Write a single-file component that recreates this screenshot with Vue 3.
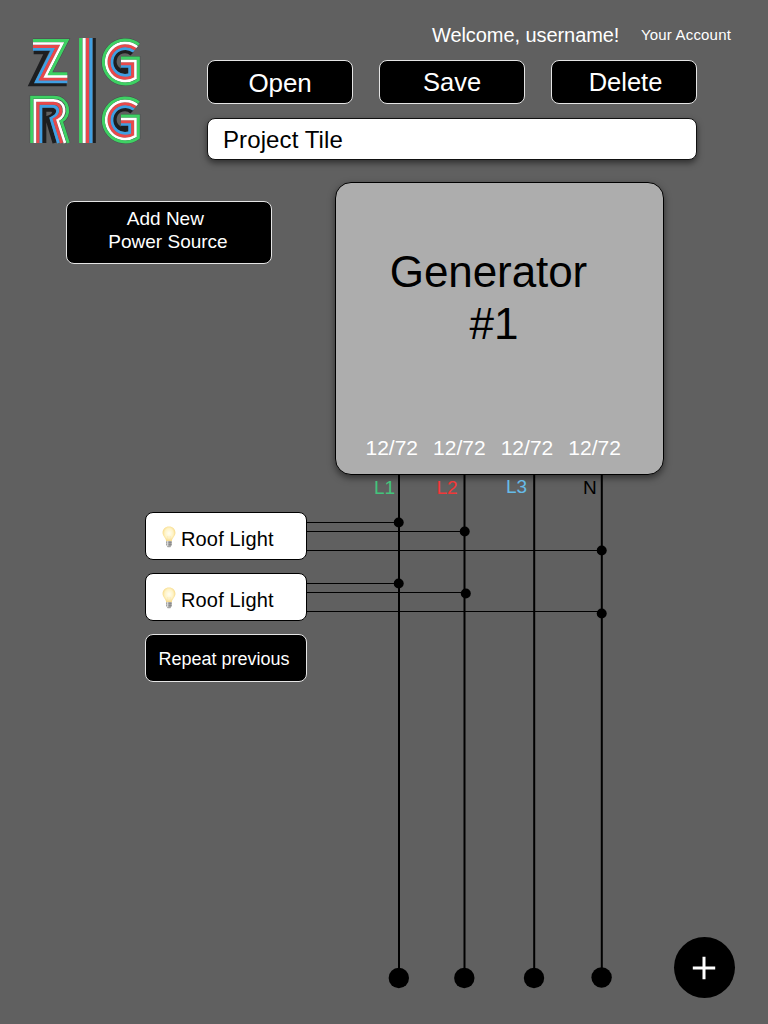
<script setup>
const actions = ['Open', 'Save', 'Delete']
const phases = [
  { name: 'L1', load: '12/72', x: 399, end: 978 },
  { name: 'L2', load: '12/72', x: 464.5, end: 978 },
  { name: 'L3', load: '12/72', x: 534.2, end: 978 },
  { name: 'N', load: '12/72', x: 601.8, end: 977.5 },
]
const taps = [
  { y: 522.5, x: 398.7, dotY: 522.5 },
  { y: 531.5, x: 464.7, dotY: 531.5 },
  { y: 550.5, x: 601.7, dotY: 550.5 },
  { y: 583.5, x: 398.7, dotY: 583.5 },
  { y: 592.5, x: 465.8, dotY: 593.5 },
  { y: 611.5, x: 601.7, dotY: 613.5 },
]
const lights = ['Roof Light', 'Roof Light']
const stripes = [
  { color: '#1d1e20', i: 4, width: 13 },
  { color: '#3f9fe3', i: 3, width: 9 },
  { color: '#e8484a', i: 2, width: 9 },
  { color: '#ffffff', i: 1, width: 8 },
  { color: '#3ed163', i: 0, width: 9 },
]
const zPaths = [
  'M39 31.500H141L90 131H142',
  'M39 40.500H126.800L76.600 139H142',
  'M39 49.500H112.600L62.900 147H142',
  'M39 58H98.700L49.200 155H142',
  'M41 66.500H80L33.500 162H140',
]
const gPaths = [
  'M357 44A66 66 0 1 0 355 149V84H303',
  'M351.600 50.900A57.500 57.500 0 1 0 346.500 144.700V92.500H303',
  'M346.400 57.500A49 49 0 1 0 338 139.800V101H303',
  'M341.100 64.200A40.500 40.500 0 1 0 329.500 134.200V109H303',
  'M335.800 71.900A31 31 0 1 0 319 125V116H303',
]
const rPaths = [
  'M35 339V202H101C150 202 154 260 124 274L145 339',
  'M44.500 339V211H100C138 211 143 257 113 271L135 339',
  'M53.500 339V220H99C127 220 132 255 103 268L125 339',
  'M62.500 339V229H98C117 229 121 253 93 265L115.500 339',
  'M72.500 339V239H93C108 239 107 257 82 264L104 339',
]
</script>

<template>
  <main class="page">
    <svg class="wires" viewBox="0 0 768 1024" width="768" height="1024">
      <g v-for="p in phases" :key="p.name">
        <path :d="`M${p.x} 470V${p.end}`" stroke="#000" stroke-width="2" />
        <circle :cx="p.x - 0.2" :cy="p.end" r="10.2" />
      </g>
      <g v-for="t in taps" :key="t.y">
        <path :d="`M306 ${t.y}H${t.x}`" stroke="#000" stroke-width="1" />
        <circle :cx="t.x" :cy="t.dotY" r="5" />
      </g>
    </svg>

    <header class="header">
      <svg class="logo" viewBox="0 0 390 360" width="130" height="120" fill="none">
        <g stroke="#444b4b" stroke-width="12">
          <path :d="zPaths[0]" /><path :d="rPaths[0]" /><path :d="gPaths[0]" />
          <path :d="gPaths[0]" transform="translate(0 174)" />
        </g>
        <g v-for="s in stripes" :key="s.color" :stroke="s.color" :stroke-width="s.width">
          <path :d="zPaths[s.i]" />
          <path :d="rPaths[s.i]" />
          <path :d="`M${182 + s.i * 10.2} 24V339`" stroke-width="9.5" />
          <path :d="gPaths[s.i]" />
          <path :d="gPaths[s.i]" transform="translate(0 174)" />
        </g>
      </svg>
      <div class="top">
        <div class="account">
          <span class="welcome">Welcome, username!</span>
          <a class="link">Your Account</a>
        </div>
        <nav class="actions">
          <button v-for="a in actions" :key="a" class="btn" :class="a.toLowerCase()">{{ a }}</button>
        </nav>
        <div class="title">Project Tile</div>
      </div>
    </header>

    <section class="source">
      <button class="btn add">Add New&nbsp;<br>Power Source</button>
      <article class="generator">
        <h1>Generator<br><span class="num">#1</span></h1>
        <div class="loads"><span v-for="p in phases" :key="p.name">{{ p.load }}</span></div>
      </article>
    </section>

    <span v-for="p in phases" :key="p.name" class="phase" :class="p.name.toLowerCase()">{{ p.name }}</span>

    <section class="devices">
      <div v-for="(l, i) in lights" :key="i" class="device">
        <svg class="bulb" viewBox="0 0 14 22" width="14" height="22">
          <defs>
            <radialGradient id="glow" cx=".5" cy=".45" r=".6">
              <stop offset="0" stop-color="#fffef4" />
              <stop offset=".55" stop-color="#fff3c4" />
              <stop offset="1" stop-color="#f3cd69" />
            </radialGradient>
          </defs>
          <path d="M7 .5C3.200.5.6 3.200.6 6.800C.6 10.400 3.800 11.500 4.300 15.500H9.700C10.200 11.500 13.400 10.400 13.400 6.800C13.400 3.200 10.800.5 7 .5Z" fill="url(#glow)" />
          <path d="M5.800 14.500V10M8.200 14.500V10" stroke="#f3dfae" stroke-width=".5" fill="none" />
          <path d="M4.300 15H9.700V19L8.400 21.200H5.600L4.300 19Z" fill="#a5a5a3" />
          <path d="M4.300 16.700H9.700M4.300 18.700H9.700" stroke="#77777a" stroke-width=".7" />
          <path d="M5.700 15V20" stroke="#dedede" stroke-width="1.200" />
        </svg>
        <span>{{ l }}</span>
      </div>
      <button class="btn repeat">Repeat previous</button>
    </section>

    <button class="fab" aria-label="Add">
      <svg width="24" height="24" viewBox="0 0 24 24"><path d="M12 .8V23.200M.8 12H23.200" stroke="#fff" stroke-width="3" /></svg>
    </button>
  </main>
</template>

<style scoped>
.page {
  position: relative;
  width: 768px;
  height: 1024px;
  overflow: hidden;
  box-sizing: border-box;
  background: #606060;
  font-family: "Liberation Sans", Arial, sans-serif;
  color: #000;
}
.page * { box-sizing: border-box; }
.wires { position: absolute; left: 0; top: 0; }
.header { display: flex; height: 182px; padding-left: 20px; }
.logo { margin-top: 30px; flex: none; }
.top { width: 582px; margin-left: 57px; }
.account { display: flex; align-items: flex-start; height: 60px; padding: 24px 0 0 225px; color: #fff; white-space: nowrap; }
.welcome { font-size: 20px; line-height: 23px; letter-spacing: -.07px; width: 209px; }
.link { font-size: 15px; line-height: 21px; letter-spacing: .18px; }
.btn {
  display: block;
  padding: 0;
  border: 1px solid #e5e5e5;
  border-radius: 8px;
  background: #000;
  color: #fff;
  font-family: inherit;
}
.actions { display: grid; grid-template-columns: repeat(3, 146px); column-gap: 26px; }
.actions .btn { height: 44px; font-size: 26px; line-height: 42px; }
.actions .open { letter-spacing: -.2px; }
.actions .open, .add { padding-top: 1px; }
.actions .save { font-size: 25.500px; }
.actions .delete { padding-left: 3px; font-size: 25.500px; }
.title {
  width: 490px;
  height: 42px;
  margin-top: 14px;
  padding-left: 15px;
  border: 1px solid #111;
  border-radius: 8px;
  background: #fff;
  box-shadow: 0 3px 6px rgba(0, 0, 0, .5);
  font-size: 24px;
  line-height: 41px;
  letter-spacing: .1px;
}
.source { display: flex; position: relative; padding-left: 66px; height: 330px; }
.add { width: 206px; height: 63px; margin-top: 19px; padding: 0 2px 6px 0; font-size: 19px; line-height: 23px; }
.generator {
  width: 329px;
  height: 293px;
  margin-left: 63px;
  border: 1px solid #000;
  border-radius: 16px;
  background: #adadad;
  box-shadow: 0 3px 7px rgba(0, 0, 0, .5);
}
h1 { margin: 63px 22px 0 0; text-align: center; font-weight: 400; font-size: 44px; line-height: 52px; letter-spacing: -.08px; }
.num { padding-left: 11px; }
.loads { display: grid; grid-template-columns: repeat(4, 67.600px); margin: 86px 0 0 29.500px; color: #fff; font-size: 21px; line-height: 24px; }
.phase { position: absolute; top: 477px; font-size: 19px; line-height: 22px; }
.l1 { left: 374px; color: #43c47c; }
.l2 { left: 436.500px; color: #f23838; }
.l3 { left: 506px; top: 476px; color: #66bbe8; }
.n { left: 583px; }
.devices { position: relative; display: flex; flex-direction: column; gap: 13px; width: 162px; margin-left: 145px; }
.device { display: flex; height: 48px; padding: 13px 0 0 16px; border: 1px solid #000; border-radius: 8px; background: #fff; font-size: 20px; line-height: 26px; letter-spacing: .15px; white-space: nowrap; }
.bulb { flex: none; margin-right: 5px; }
.repeat { height: 48px; padding-right: 4px; font-size: 18px; line-height: 48px; }
.fab {
  position: absolute;
  left: 673.500px;
  top: 937px;
  display: grid;
  place-items: center;
  width: 61px;
  height: 61px;
  padding: 0;
  border: 0;
  border-radius: 50%;
  background: #000;
}
</style>
